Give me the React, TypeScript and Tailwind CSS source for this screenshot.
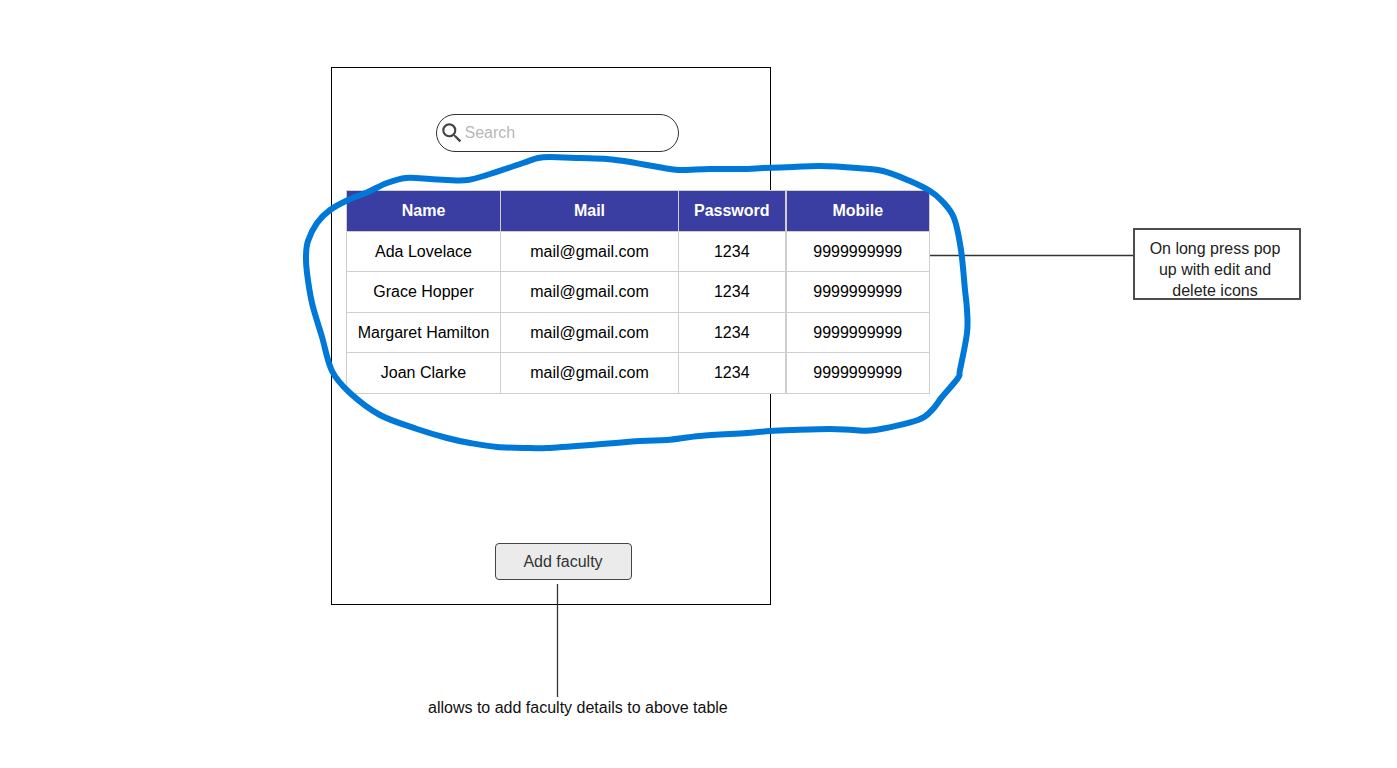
import React from "react";

type Point = [number, number];

const columns = ["Name", "Mail", "Password", "Mobile"];

const faculty = [
  { name: "Ada Lovelace", mail: "mail@gmail.com", password: "1234", mobile: "9999999999" },
  { name: "Grace Hopper", mail: "mail@gmail.com", password: "1234", mobile: "9999999999" },
  { name: "Margaret Hamilton", mail: "mail@gmail.com", password: "1234", mobile: "9999999999" },
  { name: "Joan Clarke", mail: "mail@gmail.com", password: "1234", mobile: "9999999999" },
];

// Points of the freehand marker loop, clockwise from its left edge.
const loop: Point[] = [
  [306, 256], [308, 241], [317, 223], [330, 210], [348, 200], [368, 192], [387, 183], [406, 178],
  [430, 179], [447, 180], [468, 180], [490, 174], [523, 163], [538, 158], [550, 157], [580, 158],
  [607, 159], [624, 161], [670, 169], [684, 170], [710, 169], [747, 169], [763, 168], [793, 167],
  [820, 166], [857, 168], [883, 171], [910, 181], [930, 191], [942, 201], [954, 218], [961, 250],
  [965, 290], [967, 310], [967, 333], [960, 370], [958, 378], [942, 397], [932, 410], [918, 420],
  [875, 430], [853, 430], [830, 429], [793, 430], [770, 431], [747, 433], [700, 436], [667, 440],
  [640, 441], [590, 445], [547, 448], [530, 448], [497, 447], [470, 443], [447, 438], [417, 429],
  [380, 415], [350, 393], [332, 371], [322, 337], [312, 303], [307, 273],
];

function closedCurve(points: Point[]): string {
  const n = points.length;
  const at = (i: number) => points[(i + n) % n];
  let d = `M${at(0)[0]} ${at(0)[1]}`;
  for (let i = 0; i < n; i++) {
    const [a, b, c, e] = [at(i - 1), at(i), at(i + 1), at(i + 2)];
    d += `C${b[0] + (c[0] - a[0]) / 6} ${b[1] + (c[1] - a[1]) / 6} ${c[0] - (e[0] - b[0]) / 6} ${c[1] - (e[1] - b[1]) / 6} ${c[0]} ${c[1]}`;
  }
  return d + "Z";
}

function PhoneScreen() {
  return (
    <section className="absolute left-[331px] top-[67px] flex h-[538px] w-[440px] flex-col items-center justify-between border border-black pt-[46px] pb-6">
      <label className="ml-[12px] flex h-[38px] w-[243px] items-center rounded-full border border-[#333] bg-white pl-[2px]">
        <svg viewBox="0 0 24 24" className="size-[26px] shrink-0" fill="#444" aria-hidden="true">
          <path d="M15.5 14h-.79l-.28-.27A6.47 6.47 0 0 0 16 9.5 6.5 6.5 0 1 0 9.5 16c1.61 0 3.09-.59 4.23-1.57l.27.28v.79l5 4.99L20.49 19l-4.99-5zm-6 0C7.01 14 5 11.99 5 9.5S7.01 5 9.5 5 14 7.01 14 9.5 11.99 14 9.5 14z" />
        </svg>
        <input
          type="text"
          aria-label="Search"
          placeholder="Search"
          className="h-6 w-full min-w-0 rounded-full bg-transparent text-base text-[#333] outline-none placeholder:text-[#b8b8b8]"
        />
      </label>
      <button type="button" className="ml-6 h-[37px] w-[137px] rounded-[4px] border border-[#444] bg-[#ebebeb] text-base text-[#333]">
        Add faculty
      </button>
    </section>
  );
}

function FacultyTable() {
  return (
    <table className="absolute left-[346px] top-[190px] w-[583px] table-fixed border-collapse bg-white text-center text-base text-black">
      <colgroup>
        <col className="w-[154px]" />
        <col className="w-[178px]" />
        <col className="w-[107px]" />
        <col className="w-[144px]" />
      </colgroup>
      <thead>
        <tr className="h-[41px] bg-[#3a3da1] text-white">
          {columns.map((column) => (
            <th key={column} scope="col" className="border border-[#cfcfcf] p-0 font-bold last:border-l-2">
              {column}
            </th>
          ))}
        </tr>
      </thead>
      <tbody>
        {faculty.map((row) => (
          <tr key={row.name} className="h-10 even:h-[41px]">
            <td className="border border-[#cfcfcf] p-0">{row.name}</td>
            <td className="border border-[#cfcfcf] p-0">{row.mail}</td>
            <td className="border border-[#cfcfcf] p-0">{row.password}</td>
            <td className="border border-l-2 border-[#cfcfcf] p-0">{row.mobile}</td>
          </tr>
        ))}
      </tbody>
    </table>
  );
}

export default function App() {
  return (
    <main className="relative min-h-screen w-full overflow-hidden bg-white font-['Liberation_Sans',Arial,sans-serif]">
      <PhoneScreen />
      <FacultyTable />
      <p className="absolute left-[1133px] top-[228px] h-[72px] w-[168px] border-2 border-[#4d4d4d] pt-2 pr-4 pl-3 text-center text-base leading-[21px] text-[#222]">
        On long press pop up with edit and delete icons
      </p>
      <p className="absolute left-[428px] top-[698px] text-base leading-5 whitespace-nowrap text-[#111]">
        allows to add faculty details to above table
      </p>
      <svg width="1397" height="768" className="pointer-events-none absolute left-0 top-0" fill="none" aria-hidden="true">
        <path d="M930 255.5H1133M557.5 584V697" stroke="#333" strokeWidth="1.3" />
        <path d={closedCurve(loop)} stroke="#0078d7" strokeWidth="6" strokeLinejoin="round" />
      </svg>
    </main>
  );
}
